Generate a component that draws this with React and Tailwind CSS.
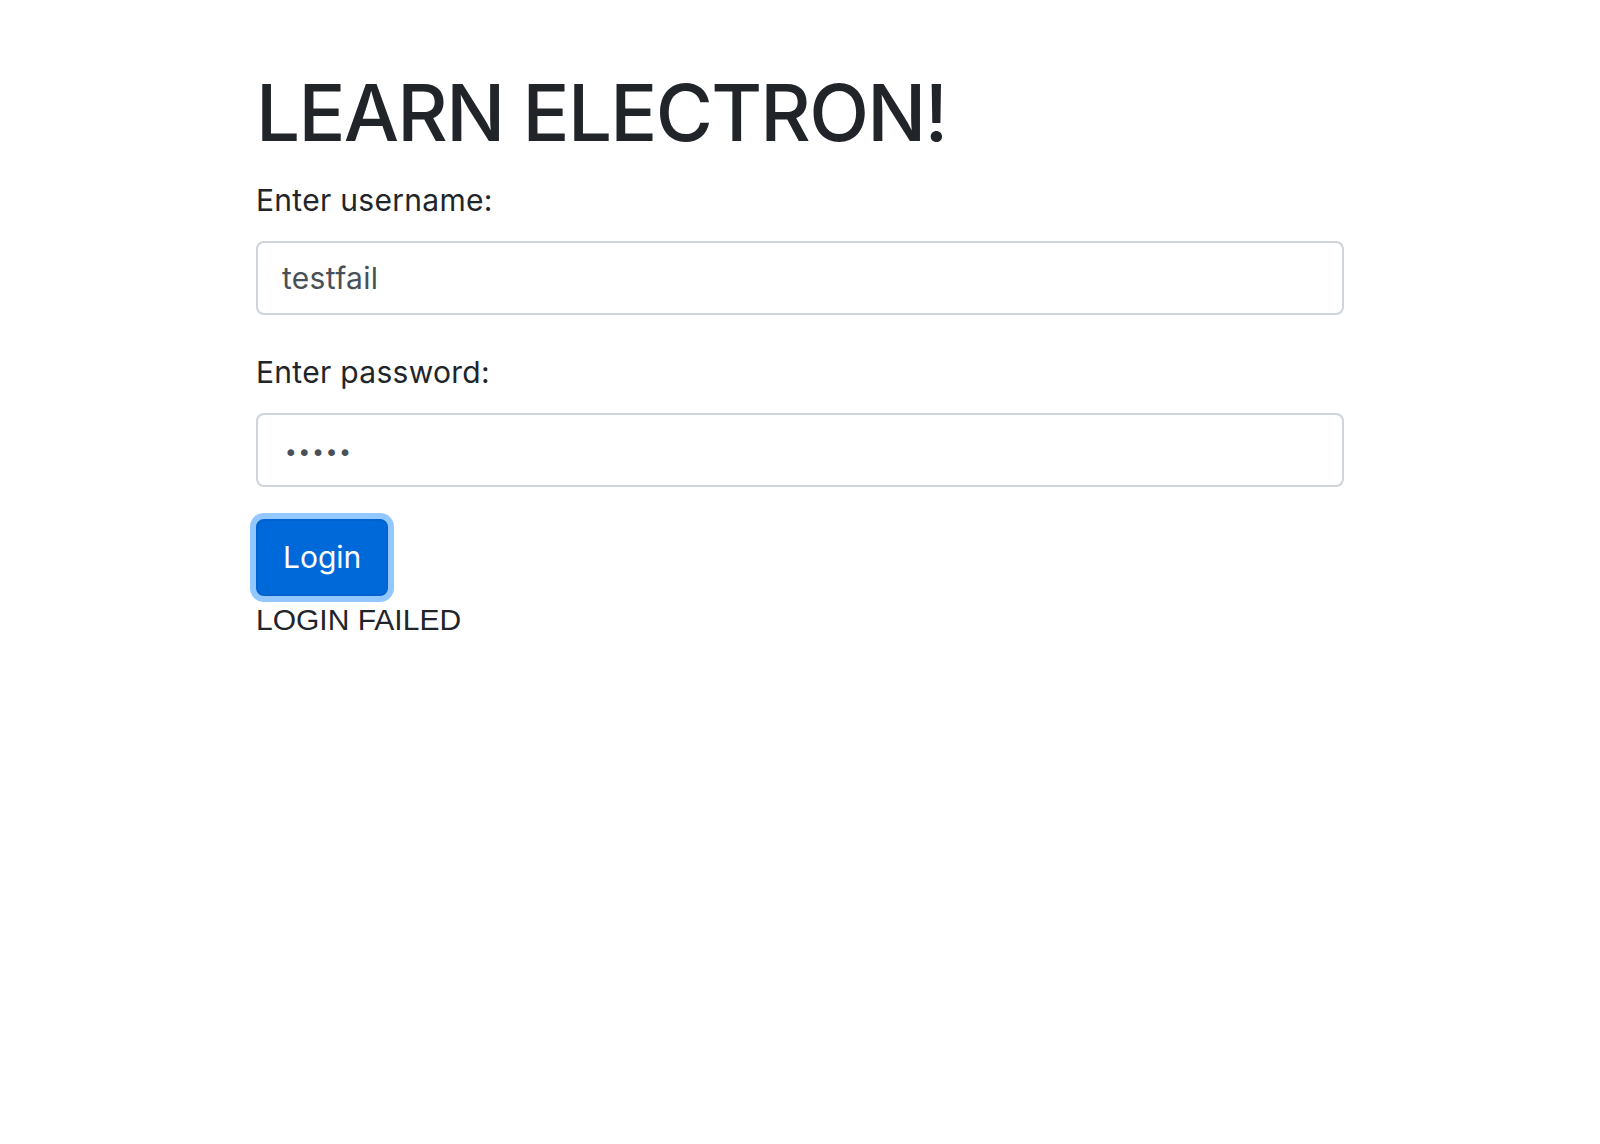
import React from "react";

export default function App() {
  const sans = { fontFamily: "Inter, 'Noto Sans', sans-serif" };
  return (
    <div className="min-h-screen bg-white" style={sans}>
      <div className="mx-auto w-[1088px] pt-[66px]">
        <h1 className="text-[78px] leading-[94px] font-medium text-[#212529] mb-[18px] tracking-[-1.7px]">
          LEARN ELECTRON!
        </h1>
        <div className="mb-[35px]">
          <label className="block text-[30px] leading-[45px] text-[#212529] mb-[18px] tracking-[0.3px]">
            Enter username:
          </label>
          <input
            type="text"
            defaultValue="testfail"
            readOnly
            className="block w-full h-[74px] border-2 border-[#ced4da] rounded-[8px] px-[24px] text-[30px] leading-[45px] text-[#495057] bg-white outline-none tracking-[0.3px]"
          />
        </div>
        <div className="mb-[32px]">
          <label className="block text-[30px] leading-[45px] text-[#212529] mb-[18px] tracking-[0.3px]">
            Enter password:
          </label>
          <input
            type="password"
            defaultValue="abcde"
            readOnly
            className="block w-full h-[74px] border-2 border-[#ced4da] rounded-[8px] px-[26px] pt-[5px] text-[23px] leading-[45px] text-[#495057] bg-white outline-none"
            style={{ fontFamily: "'DejaVu Sans', sans-serif" }}
          />
        </div>
        <button
          type="button"
          className="block bg-[#0069d9] border-2 border-[#0062cc] text-white text-[30px] leading-[45px] px-[25px] py-[14px] rounded-[8px] shadow-[0_0_0_6px_rgba(38,143,255,0.5)]"
        >
          Login
        </button>
        <div
          className="mt-[1px] text-[30px] leading-[45px] text-[#212529]"
          style={{ fontFamily: "'Liberation Sans', Arial, sans-serif" }}
        >
          LOGIN FAILED
        </div>
      </div>
    </div>
  );
}
